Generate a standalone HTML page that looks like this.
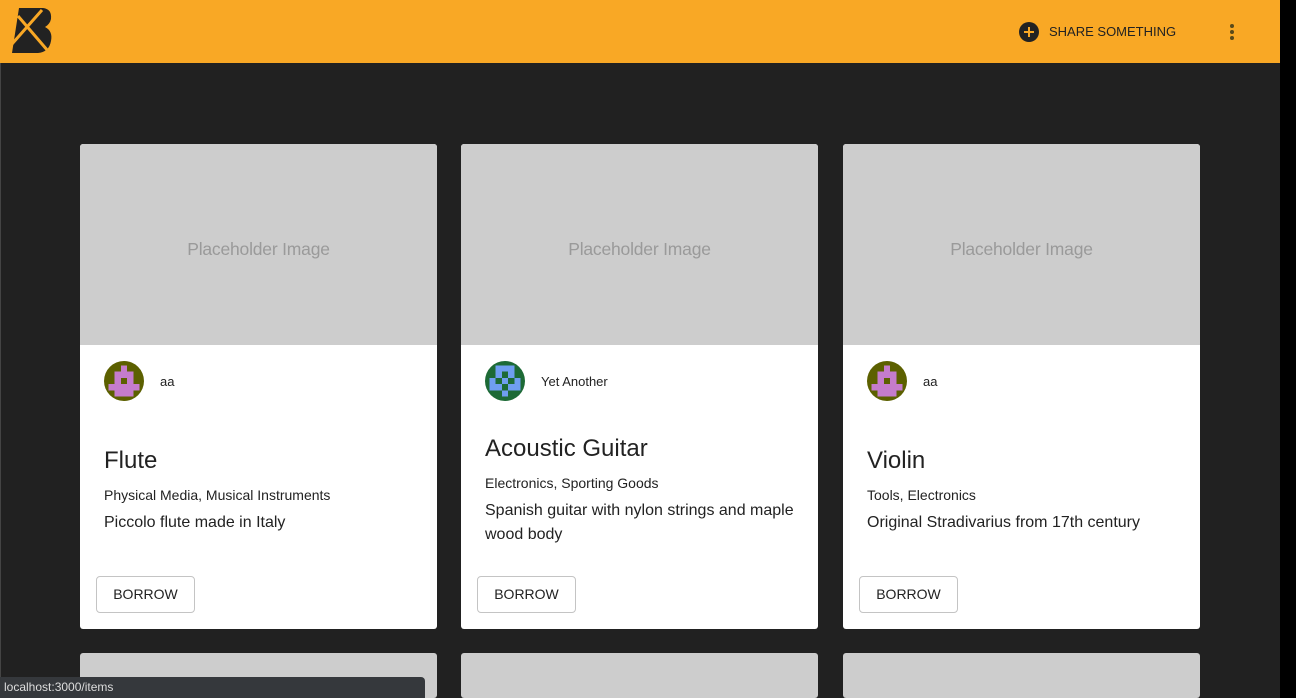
<!DOCTYPE html>
<html><head><style>
*{margin:0;padding:0;box-sizing:border-box}
html,body{width:1296px;height:698px;overflow:hidden}
body{background:#212121;font-family:"Liberation Sans",Arial,sans-serif;position:relative}
.hdr{position:absolute;left:0;top:0;width:1280px;height:63px;background:#f9a825}
.rs{position:absolute;left:1280px;top:0;width:16px;height:698px;background:#000}
.lb{position:absolute;left:0;top:63px;width:1px;height:635px;background:#444}
.card{position:absolute;width:357px;background:#fff;border-radius:3px;overflow:hidden}
.img{height:201px;background:#cdcdcd;color:#9a9a9a;font-size:17.5px;text-align:center;line-height:210px;letter-spacing:-0.2px}
.av{position:absolute;left:24px;top:217px;width:40px;height:40px;border-radius:50%;overflow:hidden}
.nm{position:absolute;left:80px;top:230px;font-size:13px;color:#222}
.t{position:absolute;left:24px;font-size:24px;color:#222;line-height:28px}
.c{position:absolute;left:24px;font-size:14px;color:#222;line-height:16px}
.d{position:absolute;left:24px;right:20px;font-size:16px;color:#222;line-height:24px}
.b{position:absolute;left:16px;top:432px;width:99px;height:37px;border:1px solid #c4c4c4;border-radius:4px;font-size:14px;color:#222;text-align:center;line-height:35px}
.st{position:absolute;left:0;top:677px;width:425px;height:21px;background:#35383c;border-radius:0 4px 0 0;color:#ddd;font-size:12px;line-height:21px;padding-left:4px}
</style></head><body>
<div class="hdr">
<svg style="position:absolute;left:10px;top:6px" width="44" height="48" viewBox="0 0 44 48">
<path d="M9 2 L33 2 Q42 3 41 13 Q40 18 35 21 Q43 25 41 35 Q39 46 28 47 L2 47 Z" fill="#222"/>
<path d="M2 38 L32 4 M8 10 L38 45" stroke="#f9a825" stroke-width="3"/>
</svg>
<svg style="position:absolute;left:1019px;top:22px" width="20" height="20" viewBox="0 0 20 20"><circle cx="10" cy="10" r="10" fill="#222"/><path d="M10 5v10M5 10h10" stroke="#f9a825" stroke-width="2"/></svg>
<div style="position:absolute;left:1049px;top:24px;font-size:13px;color:#222">SHARE SOMETHING</div>
<div style="position:absolute;left:1230px;top:24px;width:4px">
<div style="width:4px;height:4px;border-radius:50%;background:#5a4a1a;margin-bottom:2px"></div><div style="width:4px;height:4px;border-radius:50%;background:#5a4a1a;margin-bottom:2px"></div><div style="width:4px;height:4px;border-radius:50%;background:#5a4a1a"></div></div>
</div>
<div class="rs"></div><div class="lb"></div>

<div class="card" style="left:80px;top:144px;height:485px">
<div class="img">Placeholder Image</div>
<div class="av"><svg width="40" height="40" viewBox="-0.7 -0.7 6.4 6.4" shape-rendering="crispEdges"><rect x="-1" y="-1" width="8" height="8" fill="#5c6000"/><g fill="#c57ccc"><rect x="2" y="0" width="1" height="1"/><rect x="1" y="1" width="3" height="1"/><rect x="1" y="2" width="1" height="1"/><rect x="3" y="2" width="1" height="1"/><rect x="0" y="3" width="5" height="1"/><rect x="1" y="4" width="1" height="1"/><rect x="2" y="4" width="1" height="1"/><rect x="3" y="4" width="1" height="1"/></g></svg></div>
<div class="nm">aa</div>
<div class="t" style="top:303px">Flute</div>
<div class="c" style="top:343px">Physical Media, Musical Instruments</div>
<div class="d" style="top:367px">Piccolo flute made in Italy</div>
<div class="b">BORROW</div>
</div>

<div class="card" style="left:461px;top:144px;height:485px">
<div class="img">Placeholder Image</div>
<div class="av"><svg width="40" height="40" viewBox="-0.7 -0.7 6.4 6.4" shape-rendering="crispEdges"><rect x="-1" y="-1" width="8" height="8" fill="#1d6a36"/><g fill="#6f9ef0"><rect x="1" y="0" width="3" height="1"/><rect x="1" y="1" width="1" height="1"/><rect x="3" y="1" width="1" height="1"/><rect x="2" y="2" width="1" height="1"/><rect x="0" y="2" width="1" height="2"/><rect x="4" y="2" width="1" height="2"/><rect x="1" y="3" width="1" height="1"/><rect x="3" y="3" width="1" height="1"/><rect x="2" y="4" width="1" height="1"/></g></svg></div>
<div class="nm">Yet Another</div>
<div class="t" style="top:291px">Acoustic Guitar</div>
<div class="c" style="top:331px">Electronics, Sporting Goods</div>
<div class="d" style="top:355px">Spanish guitar with nylon strings and maple wood body</div>
<div class="b">BORROW</div>
</div>

<div class="card" style="left:843px;top:144px;height:485px">
<div class="img">Placeholder Image</div>
<div class="av"><svg width="40" height="40" viewBox="-0.7 -0.7 6.4 6.4" shape-rendering="crispEdges"><rect x="-1" y="-1" width="8" height="8" fill="#5c6000"/><g fill="#c57ccc"><rect x="2" y="0" width="1" height="1"/><rect x="1" y="1" width="3" height="1"/><rect x="1" y="2" width="1" height="1"/><rect x="3" y="2" width="1" height="1"/><rect x="0" y="3" width="5" height="1"/><rect x="1" y="4" width="1" height="1"/><rect x="2" y="4" width="1" height="1"/><rect x="3" y="4" width="1" height="1"/></g></svg></div>
<div class="nm">aa</div>
<div class="t" style="top:303px">Violin</div>
<div class="c" style="top:343px">Tools, Electronics</div>
<div class="d" style="top:367px">Original Stradivarius from 17th century</div>
<div class="b">BORROW</div>
</div>

<div class="card" style="left:80px;top:653px;height:45px;background:#cdcdcd"></div>
<div class="card" style="left:461px;top:653px;height:45px;background:#cdcdcd"></div>
<div class="card" style="left:843px;top:653px;height:45px;background:#cdcdcd"></div>
<div class="st">localhost:3000/items</div>
</body></html>
